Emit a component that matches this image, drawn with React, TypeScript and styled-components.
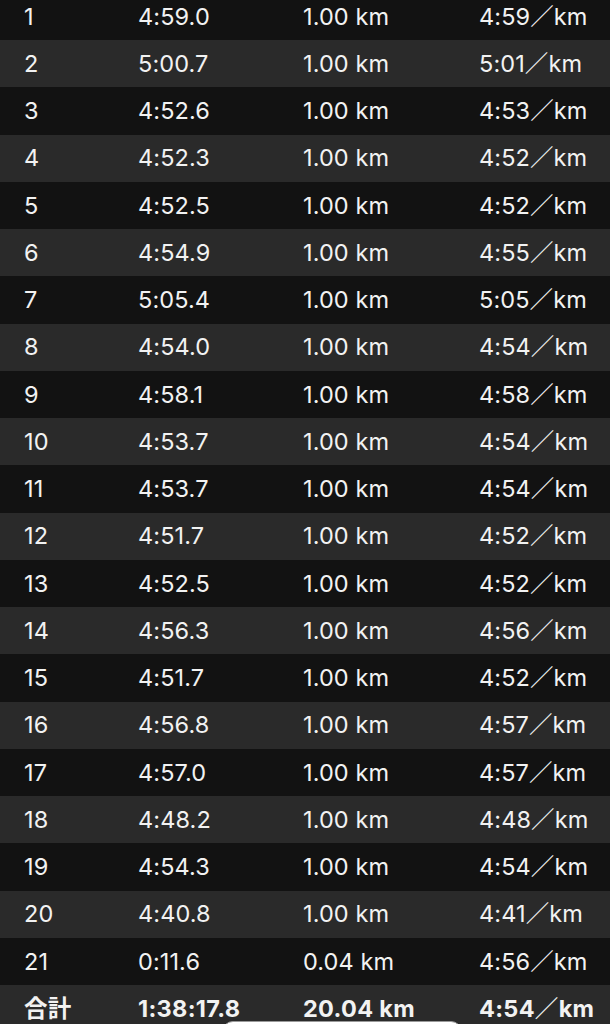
import React from "react";
import styled, { createGlobalStyle } from "styled-components";

const Global = createGlobalStyle`
  html, body {
    margin: 0;
    padding: 0;
    background: #121212;
    overflow: hidden;
  }
  #root {
    width: 610px;
  }
`;

const Table = styled.div`
  display: flex;
  flex-direction: column;
  margin-top: -7.25px;
  font-family: Inter, "Noto Sans CJK JP", sans-serif;
  color: #f2f2f2;
`;

const Row = styled.div<{ $alt: boolean; $total?: boolean }>`
  display: grid;
  grid-template-columns: 114px 165px 176px 1fr;
  align-items: center;
  height: 47.25px;
  padding-left: 24px;
  background: ${(p) => (p.$alt ? "#2a2a2a" : "#121212")};
  font-size: 23.5px;
  font-weight: ${(p) => (p.$total ? 700 : 400)};
  letter-spacing: ${(p) => (p.$total ? "0.3px" : "0.1px")};
  white-space: nowrap;
`;

const Cell = styled.span`
  line-height: 1;
`;

const Indicator = styled.div`
  position: fixed;
  left: 222px;
  top: 1021px;
  width: 238px;
  height: 20px;
  border-radius: 12px;
  background: #ffffff;
  border: 1px solid #9a9a9a;
`;

const laps: [string, string, string, string][] = [
  ["1", "4:59.0", "1.00 km", "4:59／km"],
  ["2", "5:00.7", "1.00 km", "5:01／km"],
  ["3", "4:52.6", "1.00 km", "4:53／km"],
  ["4", "4:52.3", "1.00 km", "4:52／km"],
  ["5", "4:52.5", "1.00 km", "4:52／km"],
  ["6", "4:54.9", "1.00 km", "4:55／km"],
  ["7", "5:05.4", "1.00 km", "5:05／km"],
  ["8", "4:54.0", "1.00 km", "4:54／km"],
  ["9", "4:58.1", "1.00 km", "4:58／km"],
  ["10", "4:53.7", "1.00 km", "4:54／km"],
  ["11", "4:53.7", "1.00 km", "4:54／km"],
  ["12", "4:51.7", "1.00 km", "4:52／km"],
  ["13", "4:52.5", "1.00 km", "4:52／km"],
  ["14", "4:56.3", "1.00 km", "4:56／km"],
  ["15", "4:51.7", "1.00 km", "4:52／km"],
  ["16", "4:56.8", "1.00 km", "4:57／km"],
  ["17", "4:57.0", "1.00 km", "4:57／km"],
  ["18", "4:48.2", "1.00 km", "4:48／km"],
  ["19", "4:54.3", "1.00 km", "4:54／km"],
  ["20", "4:40.8", "1.00 km", "4:41／km"],
  ["21", "0:11.6", "0.04 km", "4:56／km"],
];

export default function App() {
  return (
    <>
      <Global />
      <Table>
        {laps.map((l, i) => (
          <Row key={l[0]} $alt={i % 2 === 1}>
            {l.map((c, j) => (
              <Cell key={j}>{c}</Cell>
            ))}
          </Row>
        ))}
        <Row $alt $total>
          <Cell>合計</Cell>
          <Cell>1:38:17.8</Cell>
          <Cell>20.04 km</Cell>
          <Cell>4:54／km</Cell>
        </Row>
      </Table>
      <Indicator />
    </>
  );
}
